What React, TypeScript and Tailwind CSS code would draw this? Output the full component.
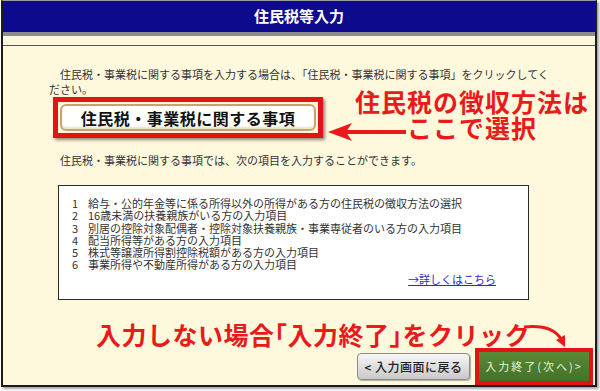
import React from 'react';

const items = [
  '給与・公的年金等に係る所得以外の所得がある方の住民税の徴収方法の選択',
  '16歳未満の扶養親族がいる方の入力項目',
  '別居の控除対象配偶者・控除対象扶養親族・事業専従者のいる方の入力項目',
  '配当所得等がある方の入力項目',
  '株式等譲渡所得割控除税額がある方の入力項目',
  '事業所得や不動産所得がある方の入力項目',
];

const App: React.FC = () => {
  return (
    <div className="w-[600px] h-[391px] bg-white font-['Noto_Sans_CJK_JP',sans-serif]">
      <div className="relative ml-px w-[596px] h-[387px] flex flex-col bg-[#fef8dd] border-x-2 border-b-2 border-[#1c1c1c] border-t border-t-[#9a9a9a] shadow-[2px_2px_2px_rgba(0,0,0,0.35)]">
        {/* header */}
        <div className="h-[31px] bg-[#0d0a8e] flex items-center justify-center text-white text-[15px] font-bold">
          住民税等入力
        </div>
        <div className="h-[4px] bg-[#8d8d8d]" />
        <div className="h-[9px]" />
        <div className="h-px bg-[#555]" />

        {/* intro */}
        <p className="mt-[21px] pl-[46px] text-[11px] leading-[15px] text-[#333]">
          <span className="pl-[11px]">住民税・事業税に関する事項を入力する場合は、「住民税・事業税に関する事項」をクリックしてく</span>
          <br />
          ださい。
        </p>

        <div className="h-[41px] pl-[50px] flex">
          <div className="w-[270px] h-[41px] border-[5px] border-[#e01414] p-[2px] bg-[#fef8dd] shadow-[2px_2px_3px_rgba(0,0,0,0.45)]">
            <button className="w-full h-full rounded-[6px] border-2 border-[#c9a46a] bg-white shadow-[inset_0_-2px_2px_rgba(200,160,100,0.35)] flex items-center justify-center text-[16px] font-bold tracking-[0.5px] text-[#111]">
              住民税・事業税に関する事項
            </button>
          </div>
        </div>

        <p className="mt-[15px] pl-[57px] text-[11px] leading-[15px] text-[#333]">
          住民税・事業税に関する事項では、次の項目を入力することができます。
        </p>

        {/* items box */}
        <div className="mt-[17px] ml-[55px] w-[471px] h-[115px] border border-[#2a2a2a] bg-white flex flex-col pt-[11px] pl-[13px] pr-[32px]">
          <ul className="text-[11px] leading-[12.3px] text-[#333]">
            {items.map((t, i) => (
              <li key={i} className="flex">
                <span className="w-[16px]">{i + 1}</span>
                <span>{t}</span>
              </li>
            ))}
          </ul>
          <div className="mt-auto mb-[14px] flex justify-end">
            <a className="text-[11px] leading-[12px] text-[#2a2ad0] underline">→詳しくはこちら</a>
          </div>
        </div>

        {/* bottom note */}
        <div className="mt-[20px] h-[28px] pl-[93px] text-[25px] leading-[28px] font-bold tracking-[0.5px] text-[#e81a1a]">
          入力しない場合<span className="[font-feature-settings:'halt']">「</span>入力終了<span className="[font-feature-settings:'halt']">」</span>をクリック
        </div>

        {/* buttons */}
        <div className="h-[37px] flex items-center justify-end pr-[2px] gap-[5px]">
          <button className="w-[113px] h-[27px] rounded-[4px] border border-[#8a8a8a] bg-gradient-to-b from-[#f7f7f7] to-[#c9c9c9] shadow-[1px_1px_1px_rgba(0,0,0,0.3)] text-[12px] font-medium text-[#222] tracking-[0.5px]">
              &lt; 入力画面に戻る
          </button>
          <div className="w-[118px] h-[37px] border-[4px] border-[#e01414] bg-[#e01414] flex">
            <button className="flex-1 bg-gradient-to-b from-[#5a8a35] to-[#44712a] text-[11px] text-[#e4f2d6] tracking-[2px] flex items-center justify-center">
              入力終了(次へ)&gt;
            </button>
          </div>
        </div>

        {/* callout: top */}
        <div className="absolute left-[341px] top-[87px] w-[256px] text-center text-[25px] leading-[26px] font-bold tracking-[1px] text-[#e81a1a]">
          住民税の徴収方法は
          <br />
          ここで選択
        </div>
        <svg className="absolute left-[323px] top-[121px]" width="80" height="20" viewBox="0 0 80 20">
          <rect x="18" y="8" width="62" height="4" fill="#e81a1a" />
          <polygon points="2,10 26,1 20,10 26,19" fill="#e81a1a" />
        </svg>

        {/* callout: bottom curved arrow */}
        <svg className="absolute left-[517px] top-[317px]" width="52" height="34" viewBox="0 0 52 34">
          <path d="M4 9 Q 32 6 41 21" stroke="#e81a1a" strokeWidth="3" fill="none" />
          <polygon points="45,29 36,22 45,17" fill="#e81a1a" />
        </svg>
      </div>
    </div>
  );
};

export default App;
